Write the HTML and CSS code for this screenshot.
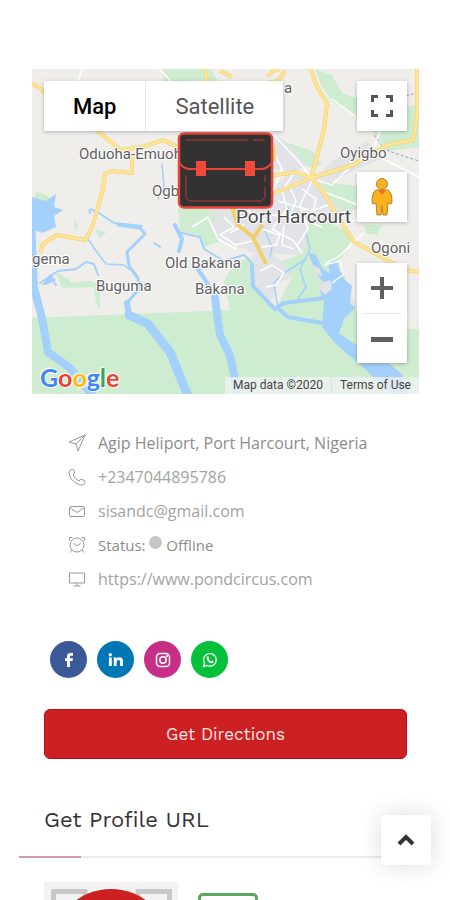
FILE: index.html
```html
<!DOCTYPE html>
<html lang="en">
<head>
    <meta charset="UTF-8">
    <meta name="viewport" content="width=device-width, initial-scale=1.0">
    <title>Business Profile</title>
    <link rel="stylesheet" href="styles.css">
</head>
<body>
    <main class="profile">
        <section class="map">
            <svg class="map-canvas" viewBox="0 0 387 325" preserveAspectRatio="xMidYMid slice" role="img" aria-label="Map of Port Harcourt">
                <rect width="387" height="325" fill="#efeeeb"/>
                <!-- built-up areas -->
                <g fill="#e2e3e6">
                    <path d="M150 130 L180 135 L240 120 L262 100 L284 110 L300 92 L335 72 L352 88 L300 112 L310 145 L290 168 L274 186 L222 184 L190 172 L165 150 Z"/>
                    <path d="M220 187 L232 180 L250 192 L262 208 L246 213 L240 232 L228 224 L220 208 Z"/>
                    <path d="M240 64 L262 78 L275 95 L262 103 L240 100 Z"/>
                </g>
                <!-- parks and wetlands -->
                <g fill="#ceeccf">
                    <path d="M0 249 L100 245 L198 241 L192 212 L200 197 L219 187 L221 215 L243 241 L260 208 L250 192 L272 184 L278 156 L290 150 L322 166 L308 192 L315 215 L323 240 L345 260 L387 260 V325 H0 Z"/>
                    <path d="M130 0 L178 0 L186 12 L132 12 Z"/>
                    <path d="M283 0 L300 6 L310 24 L328 30 L332 60 L318 42 L302 34 L290 18 Z"/>
                    <path d="M338 40 L387 36 V78 L356 82 L340 62 Z"/>
                    <path d="M256 74 L280 82 L290 96 L276 98 Z"/>
                    <path d="M288 112 L330 118 L332 140 L310 142 L296 126 Z"/>
                    <path d="M146 139 L170 136 L184 146 L178 160 L190 172 L172 178 L166 166 L148 162 Z"/>
                    <path d="M332 156 L350 156 L345 166 L334 164 Z"/>
                    <path d="M24 204 Q36 208 40 214 L58 212 L68 216 V240 L64 234 L62 218 L30 219 Z"/>
                    <path d="M63 160 L74 163 L68 170 Z M42 150 L46 158 L43 162 Z M4 122 L22 130 L16 136 L2 132 Z"/>
                </g>
                <!-- rivers -->
                <g fill="none" stroke="#a3d1fb" stroke-linejoin="round" stroke-linecap="round">
                    <path stroke-width="8" d="M-1 152 L2 219 L10 249 L16 283 L38 299 L61 327"/>
                    <path stroke-width="3" d="M86 156 L108 159 L113 165 L95 183 L97 197 L106 209 L107 220 L95 234"/>
                    <path stroke-width="6" d="M95 234 L97 246 L115 254"/>
                    <path stroke-width="9" d="M97 246 L116 255 L138 283 L156 327"/>
                    <path stroke-width="2" d="M58 144 Q56 138 64 142 L82 154 L110 157"/>
                    <path stroke-width="1.5" d="M130 95 L132 118 L126 130 M56 170 L64 182 L74 195 L92 196 L98 201"/>
                    <path stroke-width="2" d="M8 214 L26 202 L44 200 L54 193 L62 195 L66 206 M18 208 L24 216 M128 178 L122 174"/>
                    <path stroke-width="4" d="M143 156 L150 170 L147 182 M165 199 L174 212 L183 229 L186 240"/>
                    <path stroke-width="8" d="M183 229 L188 266 L198 286 L206 325"/>
                    <path stroke-width="2" d="M150 164 L168 168 L172 180 L192 192 L212 186 L220 194 L221 214"/>
                    <path stroke-width="4" d="M220 196 L221 217 L243 240 L252 234 L292 229 M248 241 L256 248 L290 254"/>
                    <path stroke-width="1.5" d="M246 240 L242 214 L248 208 M266 230 L274 218 L268 200 L278 180 L274 164 M230 156 L240 178 L238 188 M252 204 L274 190 M252 134 L262 146"/>
                </g>
                <g fill="#a3d1fb">
                    <path d="M0 128 L14 132 L24 125 L22 138 L31 141 L22 147 L24 158 L10 164 L0 160 Z"/>
                    <path d="M276 183 L284 186 L290 199 L300 206 L309 202 L312 210 L320 217 L318 232 L324 238 L312 250 L307 264 L321 274 L344 284 L370 305 L376 325 L360 325 L335 302 L303 274 L290 258 L292 232 L288 222 L294 216 L284 204 Z"/>
                    <path d="M296 192 H305 L308 205 L299 213 Z"/>
                    <path d="M10 216 L18 205 L24 211 L14 216 Z"/>
                </g>
                <path fill="#e2e3e6" d="M281 196 L288 200 L290 207 L283 205 Z M288 214 L298 211 L300 220 L293 226 L288 220 Z M318 230 L324 232 L323 238 L318 235 Z"/>
                <!-- minor roads -->
                <g fill="none" stroke="#ffffff" stroke-width="1.5" stroke-linejoin="round">
                    <path d="M50 0 L46 12 M128 0 L140 14 M242 66 L268 94 L290 122 L326 136 M241 122 L250 100 L240 80 M300 30 L330 52 L348 62 L340 84 L387 108"/>
                    <path d="M280 110 L300 116 L318 98 L334 88 M262 104 L250 122 L255 140 L240 160 L262 172 L270 184 M280 112 L268 136 L276 160 L264 178"/>
                    <path d="M246 132 L280 142 L296 136 M240 146 L268 150 L290 158 M192 148 L202 158 L188 166 L204 176 L220 172"/>
                    <path d="M230 160 L248 166 L244 176 L230 178 M252 156 L250 176 L262 180 M212 156 L198 164 M228 202 L240 196 L252 204 L244 216 L234 218"/>
                    <path d="M160 158 L176 148 L186 170 L204 180 M294 194 L306 188 L332 164 M292 196 L308 192 L311 206 L300 214"/>
                    <path d="M270 120 L284 130 L280 148 M258 118 L264 132 L256 150 M216 140 L224 152 L240 148 M302 142 L312 156 L326 150"/>
                </g>
                <path fill="none" stroke="#8fa3c4" stroke-dasharray="3 2" d="M342 66 L352 80 L368 86 L387 92 M374 27 L387 23"/>
                <!-- highways -->
                <g fill="none" stroke-linejoin="round">
                    <g stroke="#f2cf68" stroke-width="4">
                        <path d="M0 14 L14 24 L68 64 L90 82 L100 88 V104 L80 102 L73 105 L71 120 L60 159 L53 171 L25 166 L11 175 L8 184"/>
                        <path d="M82 82 L110 78 L131 71 L150 80"/>
                        <path d="M173 -1 L175 14 M188 2 L200 8 M236 8 Q238 2 248 0 M253 2 L246 12 L237 14"/>
                        <path d="M278 -1 L285 18 L295 34 L292 60 L287 80 L279 109"/>
                        <path d="M238 126 L279 109 L321 96 L355 76 L381 71 L385 50 V-1"/>
                        <path d="M238 107 L264 103 L280 109 L292 124 L303 143 L311 156 L322 173 L355 191 L372 201 L388 203"/>
                        <path d="M200 138 L206 156 L221 168 L234 195 M230 156 L222 168 M241 76 L242 92"/>
                    </g>
                    <g stroke="#fde496" stroke-width="3">
                        <path d="M0 14 L14 24 L68 64 L90 82 L100 88 V104 L80 102 L73 105 L71 120 L60 159 L53 171 L25 166 L11 175 L8 184"/>
                        <path d="M82 82 L110 78 L131 71 L150 80"/>
                        <path d="M173 -1 L175 14 M188 2 L200 8 M236 8 Q238 2 248 0 M253 2 L246 12 L237 14"/>
                        <path d="M278 -1 L285 18 L295 34 L292 60 L287 80 L279 109"/>
                        <path d="M238 126 L279 109 L321 96 L355 76 L381 71 L385 50 V-1"/>
                        <path d="M238 107 L264 103 L280 109 L292 124 L303 143 L311 156 L322 173 L355 191 L372 201 L388 203"/>
                    </g>
                </g>
                <!-- place names -->
                <g class="place">
                    <text x="47" y="90">Oduoha-Emuoh</text>
                    <text x="120" y="127">Ogb</text>
                    <text x="252" y="24">a</text>
                    <text x="308" y="89">Oyigbo</text>
                    <text x="339" y="184">Ogoni</text>
                    <text x="0" y="195">gema</text>
                    <text x="64" y="222">Buguma</text>
                    <text x="133" y="199">Old Bakana</text>
                    <text x="163" y="225">Bakana</text>
                    <text class="place-city" x="204" y="154">Port Harcourt</text>
                </g>
                <!-- briefcase marker -->
                <g fill="none" stroke="#e8453a">
                    <rect x="147" y="64.500" width="93" height="74" rx="5" fill="#333132" stroke-width="2.500"/>
                    <path stroke-width="2" d="M147 93 Q150 99 157 100 H230 Q237 99 240 93"/>
                    <path stroke-width="1" stroke="#b23c35" d="M153 71 H216 M221 71 H233 M154 106 V126 Q154 132 160 132 H227 Q233 132 233 126 V118 M233 113 V106"/>
                    <path fill="#f04a3c" stroke="none" d="M164 92 H174 V107 H164 Z M213 92 H223 V107 H213 Z"/>
                </g>
            </svg>

            <div class="map-types">
                <button class="map-type active" type="button">Map</button>
                <button class="map-type" type="button">Satellite</button>
            </div>
            <div class="map-tools">
                <button class="map-tool" type="button" aria-label="Toggle fullscreen view">
                    <svg width="24" height="24" viewBox="0 0 24 24" fill="none" stroke="#555" stroke-width="3">
                        <path d="M2.500 8V2.500H8M16 2.500H21.500V8M21.500 16V21.500H16M8 21.500H2.500V16"/>
                    </svg>
                </button>
                <button class="map-tool pegman" type="button" aria-label="Street View">
                    <svg width="24" height="40" viewBox="0 0 24 40" fill="#f9b21d" stroke="#b9822a" stroke-width="1">
                        <path d="M6 13 Q2 15 2 25 L3 27 L6 26 L7 38 H11 L12 29 L13 38 H17 L18 26 L21 27 L22 25 Q22 15 18 13 Z"/>
                        <circle cx="12" cy="7" r="5.500"/>
                        <path fill="#e5702a" stroke="none" d="M8 13 H16 L12 18 Z"/>
                    </svg>
                </button>
                <div class="map-zoom">
                    <button type="button" aria-label="Zoom in">
                        <svg width="24" height="24" viewBox="0 0 24 24" fill="#606060"><path d="M10 1H14V10H23V14H14V23H10V14H1V10H10Z"/></svg>
                    </button>
                    <button type="button" aria-label="Zoom out">
                        <svg width="24" height="24" viewBox="0 0 24 24" fill="#606060"><path d="M1 10H23V15H1Z"/></svg>
                    </button>
                </div>
            </div>
            <div class="map-logo"><span class="blue">G</span><span class="red">o</span><span class="yellow">o</span><span class="blue">g</span><span class="green">l</span><span class="red">e</span></div>
            <div class="map-legal"><span>Map data ©2020</span><a href="#">Terms of Use</a></div>
        </section>

        <ul class="contact">
            <li>
                <svg viewBox="0 0 18 18"><path d="M17 1 L1 8 L8 10 L10 17 Z M17 1 L8 10"/></svg>
                <a class="dark" href="#">Agip Heliport, Port Harcourt, Nigeria</a>
            </li>
            <li>
                <svg viewBox="0 0 18 18"><path d="M4 1 Q1 2 1 5 Q2 12 8 15 Q12 18 15 17 Q17 16 17 14 Q17 12 14 11.500 Q12 11 11 13 Q7 11 5 7 Q7 6 6.500 4 Q6 1 4 1 Z"/></svg>
                <a href="tel:+2347044895786">+2347044895786</a>
            </li>
            <li>
                <svg viewBox="0 0 18 18"><path d="M3 4.500H15Q16.500 4.500 16.500 6V13Q16.500 14.500 15 14.500H3Q1.500 14.500 1.500 13V6Q1.500 4.500 3 4.500ZM2 6L9 10.500L16 6"/></svg>
                <a href="mailto:sisandc@gmail.com">sisandc@gmail.com</a>
            </li>
            <li>
                <svg viewBox="0 0 18 18"><circle cx="9" cy="9" r="7"/><path d="M5.500 7.500L9 10L12.500 7.500M1.500 4.500V1.500H4.500M13.500 1.500H16.500V4.500M4 14L2 16.500M14 14L16 16.500"/></svg>
                <span class="dark status">Status: <i class="dot"></i> Offline</span>
            </li>
            <li>
                <svg viewBox="0 0 18 18"><path d="M1.500 3H16.500V13H1.500ZM9 13V16M5.500 16H12.500"/></svg>
                <a href="#">https://www.pondcircus.com</a>
            </li>
        </ul>

        <nav class="social">
            <a class="facebook" href="#" aria-label="Facebook">
                <svg viewBox="0 0 16 16" fill="#fff"><path d="M6 15V9H4V6.300H6V4.500Q6 1 9.500 1H12V3.700H10.300Q9 3.700 9 5V6.300H12L11.500 9H9V15Z"/></svg>
            </a>
            <a class="linkedin" href="#" aria-label="LinkedIn">
                <svg viewBox="0 0 16 16" fill="#fff"><circle cx="2.300" cy="2.800" r="1.700"/><path d="M.9 5.500H3.800V14H.9ZM5.700 5.500H8.500V6.700Q9.300 5.300 11.400 5.300Q15 5.300 15 9.200V14H12.100V9.800Q12.100 7.900 10.500 7.900Q8.600 7.900 8.600 9.900V14H5.700Z"/></svg>
            </a>
            <a class="instagram" href="#" aria-label="Instagram">
                <svg viewBox="0 0 16 16" fill="none" stroke="#fff" stroke-width="1.500"><rect x="1.500" y="1.500" width="13" height="13" rx="3.500"/><circle cx="8" cy="8" r="3.200"/><circle cx="11.900" cy="4.200" r=".4"/></svg>
            </a>
            <a class="whatsapp" href="#" aria-label="WhatsApp">
                <svg viewBox="0 0 16 16" fill="none" stroke="#fff" stroke-width="1.300"><path d="M1.500 14.500L2.500 11Q1.500 9.500 1.500 7.800A6.400 6.300 0 1 1 5 13.500Z"/><path fill="#fff" stroke="none" d="M5.600 4.300L6.500 4.400L7.200 6L6.500 7Q7.500 8.700 9.200 9.400L10.100 8.500L11.700 9.300Q11.600 11.300 9.700 11.300Q5.500 10.500 4.600 6.500Q4.600 4.900 5.600 4.300Z"/></svg>
            </a>
        </nav>

        <a class="directions" href="#">Get Directions</a>

        <h2 class="section-title">Get Profile URL</h2>

        <div class="share">
            <svg class="qr" viewBox="0 0 134 134" role="img" aria-label="Profile QR code">
                <rect width="134" height="134" fill="#f3f3f3"/>
                <g fill="none" stroke="#c8c8c8" stroke-width="5">
                    <path d="M9.500 9.500H41V41H9.500ZM94 9.500H125.500V41H94ZM9.500 94H41V125.500H9.500Z"/>
                </g>
                <path fill="#c8c8c8" d="M18 18H33V33H18ZM102 18H117V33H102ZM18 102H33V117H18Z"/>
                <circle cx="67" cy="67" r="60" fill="#cc2022"/>
            </svg>
            <button class="copy" type="button" aria-label="Copy profile URL"></button>
        </div>
    </main>

    <button class="to-top" type="button" aria-label="Back to top">
        <svg width="18" height="12" viewBox="0 0 18 12" fill="none" stroke="#333" stroke-width="4"><path d="M2 10L9 3L16 10"/></svg>
    </button>
</body>
</html>
```
FILE: styles.css
```css
* {
    margin: 0;
    padding: 0;
    box-sizing: border-box;
}

html {
    height: 100%;
    overflow: hidden;
}

body {
    height: 100%;
    overflow-y: auto;
    scrollbar-width: none;
    font-family: 'Open Sans', sans-serif;
    background-color: #fff;
    color: #a3a3a3;
}

a {
    color: inherit;
    text-decoration: none;
}

button {
    border: 0;
    background-color: #fff;
    font-family: inherit;
    cursor: pointer;
}

.profile {
    padding: 69px 19px 0;
}

/* Map */
.map {
    position: relative;
    height: 325px;
    margin: 0 12px 0 13px;
    overflow: hidden;
    font-family: Roboto, sans-serif;
}

.map-canvas {
    display: block;
    width: 100%;
    height: 100%;
}

.place {
    font-size: 15px;
    fill: #606060;
    stroke: #fff;
    stroke-width: 2px;
    paint-order: stroke;
}

.place-city {
    font-size: 19px;
    fill: #4a4a4a;
}

.map-types {
    position: absolute;
    top: 12px;
    left: 12px;
    display: flex;
    background-color: #fff;
    box-shadow: 0 1px 4px rgba(0, 0, 0, 0.25);
}

.map-type {
    height: 50px;
    padding: 0 29px;
    font-size: 22px;
    color: #565656;
}

.map-type.active {
    border-right: 1px solid #e8e8e8;
    font-weight: 500;
    color: #000;
}

.map-tools {
    position: absolute;
    top: 12px;
    right: 12px;
    width: 50px;
}

.map-tool,
.map-zoom {
    display: flex;
    justify-content: center;
    align-items: center;
    width: 50px;
    height: 50px;
    box-shadow: 0 1px 4px rgba(0, 0, 0, 0.25);
}

.pegman {
    margin: 41px 0;
}

.map-zoom {
    flex-direction: column;
    height: 100px;
    background-color: #fff;
}

.map-zoom button {
    display: flex;
    justify-content: center;
    align-items: center;
    width: 38px;
    height: 50px;
}

.map-zoom button + button {
    border-top: 1px solid #e6e6e6;
}

.map-logo {
    position: absolute;
    left: 8px;
    bottom: 1px;
    font-family: Lato, sans-serif;
    font-size: 25px;
    line-height: 32px;
    text-shadow: 0 0 2px #fff, 1px 1px 1px #fff, -1px -1px 1px #fff;
}

.blue {
    color: #4285f4;
}

.red {
    color: #ea4335;
}

.yellow {
    color: #fbbc05;
}

.green {
    color: #34a853;
}

.map-logo span {
    font-weight: 700;
}

.map-legal {
    position: absolute;
    right: 0;
    bottom: 0;
    display: flex;
    gap: 1px;
    font-size: 12px;
    line-height: 17px;
    color: #444;
}

.map-legal > * {
    padding: 0 8px;
    background-color: rgba(245, 245, 245, 0.7);
}

/* Contact details */
.contact {
    margin-top: 32px;
    padding-left: 49px;
    list-style: none;
    font-size: 16px;
    line-height: 34px;
}

.contact li {
    display: flex;
    align-items: center;
    gap: 12px;
}

.contact svg {
    width: 18px;
    height: 18px;
    fill: none;
    stroke: #999;
    stroke-width: 1px;
}

.contact .dark {
    color: #8c8c8c;
}

.contact .status {
    font-size: 15px;
}

.dot {
    display: inline-block;
    width: 13px;
    height: 13px;
    border-radius: 50%;
    background-color: #c6c6c6;
    vertical-align: 2px;
}

/* Social links */
.social {
    display: flex;
    gap: 10px;
    margin-top: 45px;
    padding-left: 31px;
}

.social a {
    display: flex;
    justify-content: center;
    align-items: center;
    width: 37px;
    height: 37px;
    border-radius: 50%;
}

.social svg {
    width: 16px;
    height: 16px;
}

.facebook {
    background-color: #3b5998;
}

.linkedin {
    background-color: #0077b5;
}

.instagram {
    background-color: #c72f86;
}

.whatsapp {
    background-color: #05c139;
}

.directions {
    display: block;
    margin: 31px 24px 0 25px;
    border: 1px solid #b81114;
    border-radius: 6px;
    background-color: #cc2022;
    font-family: 'Work Sans', Inter, sans-serif;
    font-size: 17px;
    line-height: 48px;
    text-align: center;
    color: #fbe6e6;
}

.section-title {
    position: relative;
    margin-top: 35px;
    padding: 10px 25px 20px;
    border-bottom: 2px solid #ececec;
    font-family: 'Work Sans', Inter, sans-serif;
    font-size: 22px;
    font-weight: 400;
    line-height: 32px;
    color: #333;
}

.section-title::after {
    content: '';
    position: absolute;
    left: 0;
    bottom: -2px;
    width: 62px;
    height: 2px;
    background-color: #c9a0a5;
}

.share {
    display: flex;
    align-items: flex-start;
    gap: 20px;
    padding: 24px 25px;
}

.qr {
    width: 134px;
    height: 134px;
}

.copy {
    width: 60px;
    height: 50px;
    margin-top: 11px;
    border: 3px solid #57a85b;
    border-radius: 5px;
}

.to-top {
    position: fixed;
    right: 19px;
    bottom: 35px;
    display: flex;
    justify-content: center;
    align-items: center;
    width: 50px;
    height: 50px;
    border-radius: 4px;
    box-shadow: 0 0 24px rgba(0, 0, 0, 0.14);
}
```
